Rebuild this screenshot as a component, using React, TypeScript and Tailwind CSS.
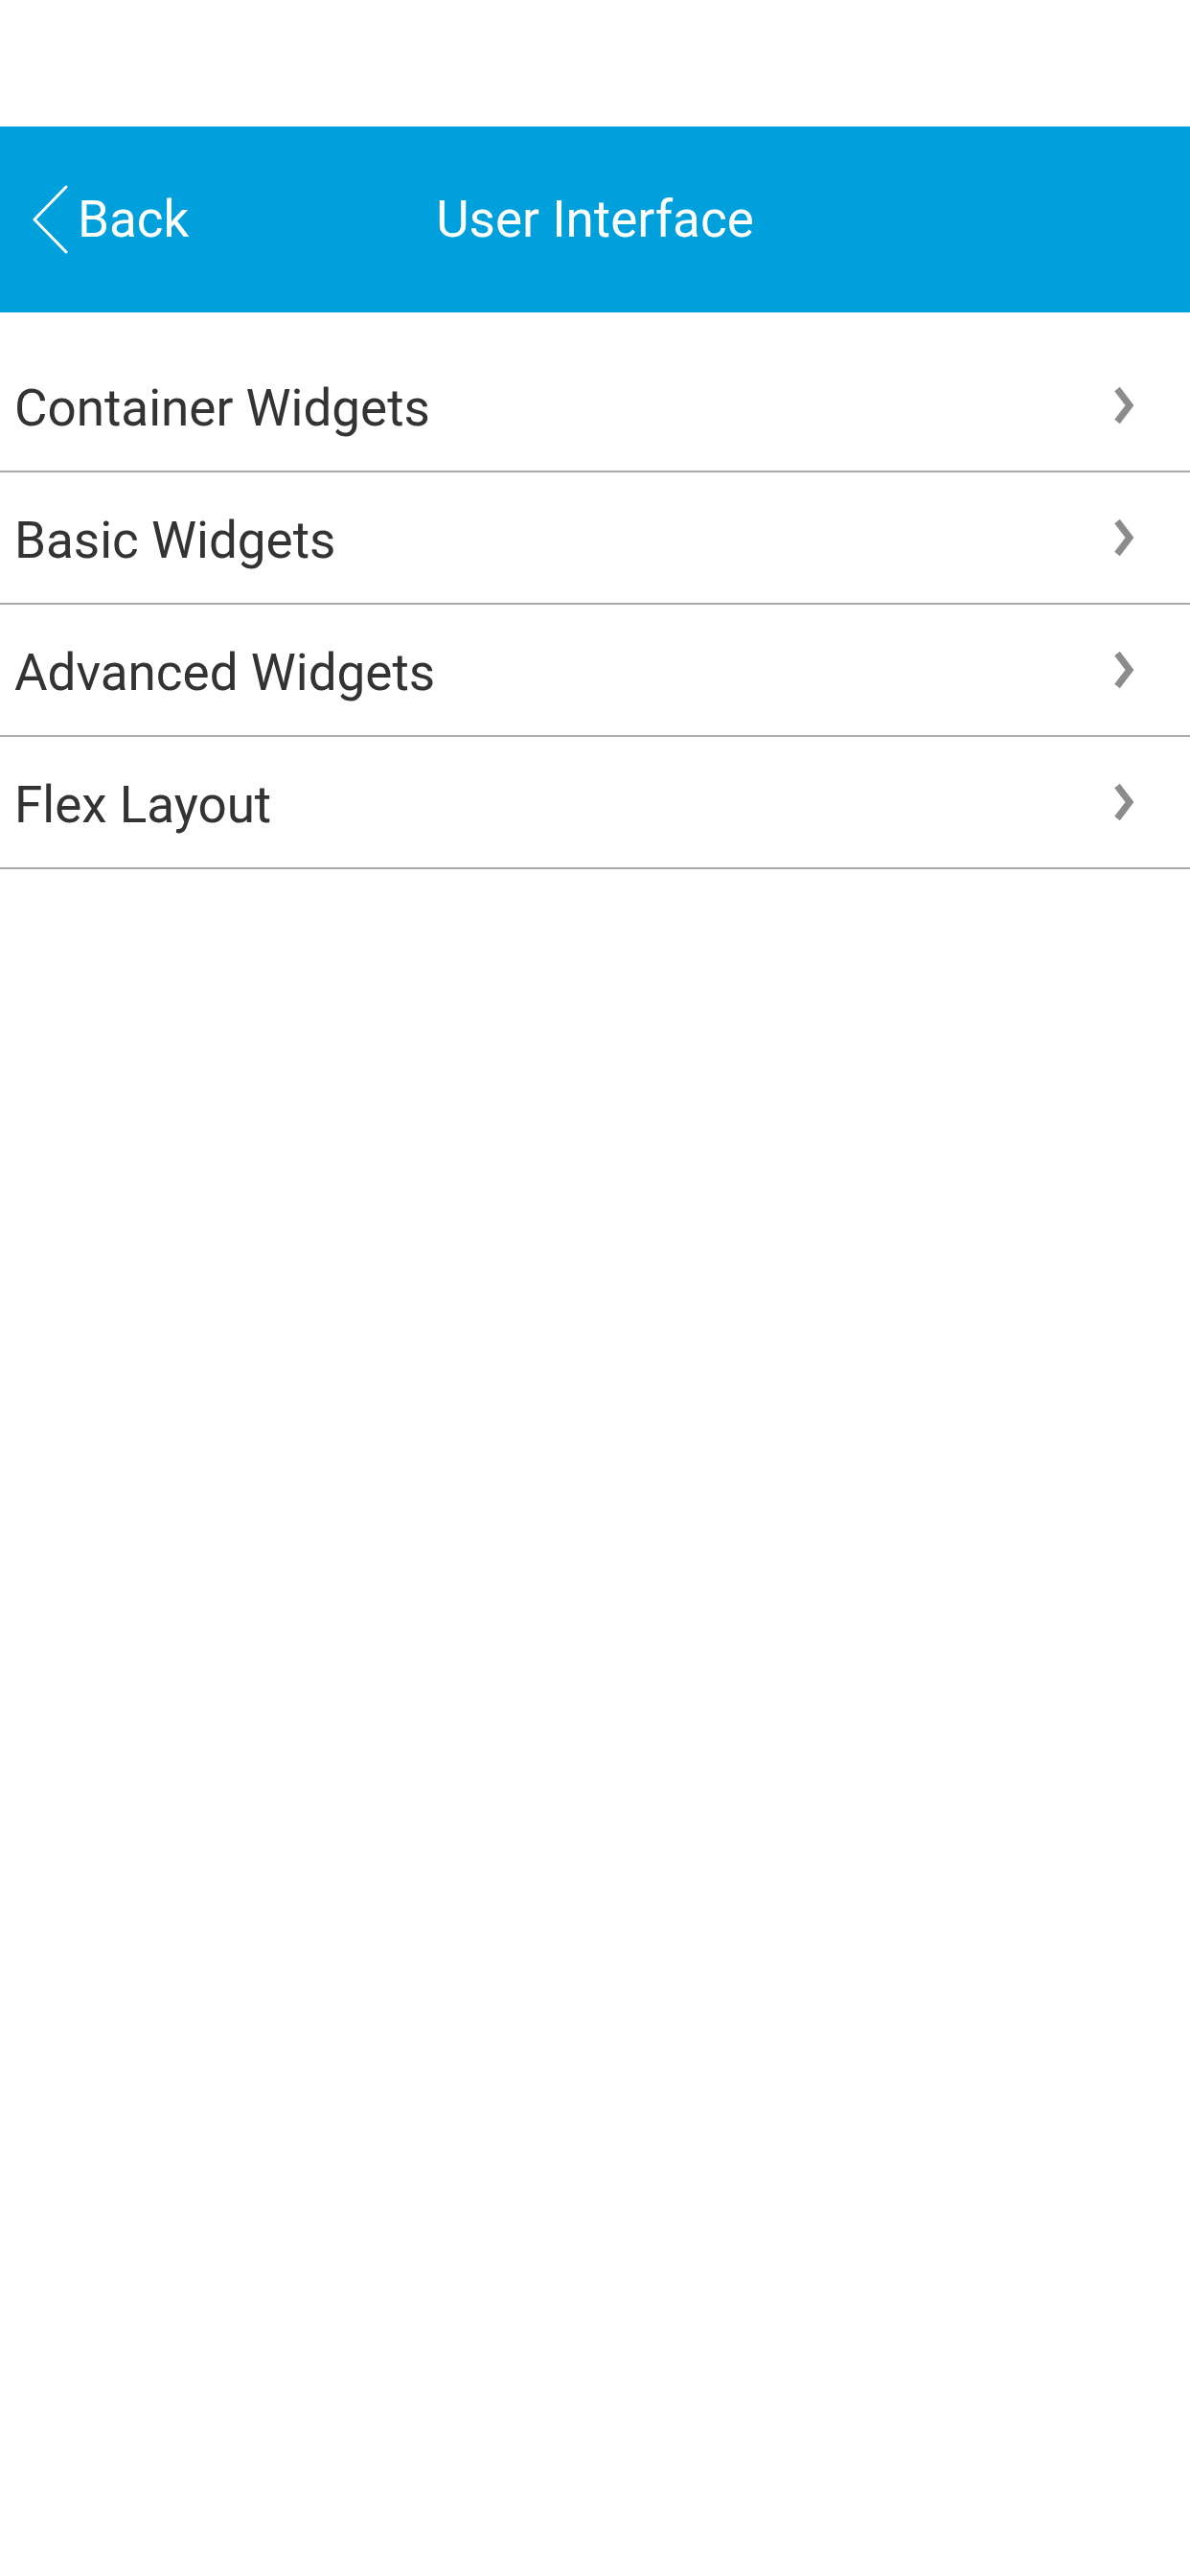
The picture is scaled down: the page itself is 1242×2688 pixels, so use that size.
const items = ["Container Widgets", "Basic Widgets", "Advanced Widgets", "Flex Layout"];

function BackChevron() {
  return (
    <svg width="40" height="72" viewBox="0 0 40 72" fill="none">
      <polyline
        points="36,2 3,36 36,70"
        stroke="white"
        strokeWidth="3"
        strokeLinecap="round"
        strokeLinejoin="round"
      />
    </svg>
  );
}

function RowChevron() {
  return (
    <svg width="22" height="40" viewBox="0 0 22 40" fill="none">
      <polyline points="4,3 17,20 4,37" stroke="#8c8c8c" strokeWidth="7" strokeLinejoin="miter" />
    </svg>
  );
}

export default function App() {
  return (
    <div className="min-h-screen bg-white font-['Roboto',sans-serif]">
      {/* status bar space */}
      <div className="h-[132px]" />

      {/* Nav bar */}
      <header className="h-[194px] bg-[#00a0dc] grid grid-cols-[1fr_auto_1fr] items-center text-white">
        <button className="flex items-center pl-[33px] justify-self-start">
          <BackChevron />
          <span className="ml-[8px] text-[53px] leading-none">Back</span>
        </button>
        <h1 className="text-[53px] leading-none font-normal">User Interface</h1>
        <div />
      </header>

      {/* List */}
      <ul className="mt-[29px]">
        {items.map((label) => (
          <li
            key={label}
            className="h-[138px] border-b-2 border-[#aaaaaa] flex items-center justify-between pl-[15px] pr-[58px]"
          >
            <span className="pt-[6px] text-[53px] leading-none text-[#333333]">{label}</span>
            <RowChevron />
          </li>
        ))}
      </ul>
    </div>
  );
}
